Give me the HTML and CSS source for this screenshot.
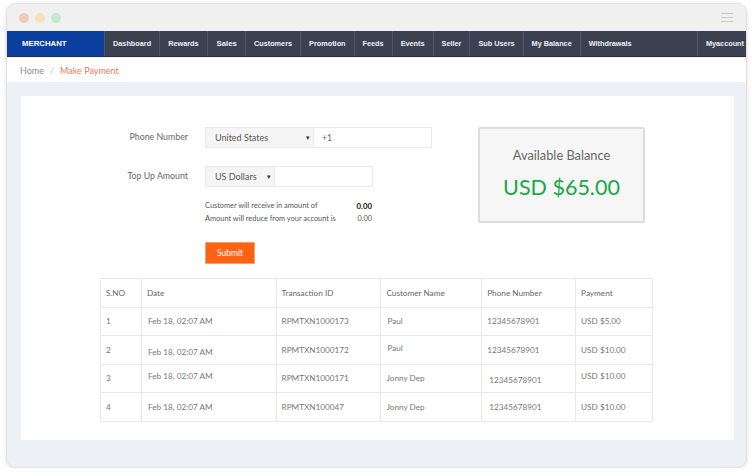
FILE: index.html
```html
<!DOCTYPE html>
<html>
<head>
<meta charset="utf-8">
<link rel="stylesheet" href="styles.css">
</head>
<body>
<div class="window">
  <div class="titlebar">
    <span class="dot dot-red"></span>
    <span class="dot dot-yellow"></span>
    <span class="dot dot-green"></span>
    <span class="spacer"></span>
    <span class="burger"><i></i><i></i><i></i></span>
  </div>
  <nav class="navbar">
    <div class="brand">MERCHANT</div>
    <a class="nav-item">Dashboard</a>
    <a class="nav-item">Rewards</a>
    <a class="nav-item nav-wide">Sales</a>
    <a class="nav-item">Customers</a>
    <a class="nav-item">Promotion</a>
    <a class="nav-item">Feeds</a>
    <a class="nav-item">Events</a>
    <a class="nav-item">Seller</a>
    <a class="nav-item">Sub Users</a>
    <a class="nav-item">My Balance</a>
    <a class="nav-item nav-grow">Withdrawals</a>
    <a class="nav-item nav-last">Myaccount</a>
  </nav>
  <div class="breadcrumb">
    <span class="crumb-home">Home</span>
    <span class="crumb-sep">/</span>
    <span class="crumb-active">Make Payment</span>
  </div>
  <div class="content">
    <div class="panel">
      <div class="top">
        <div class="form">
          <div class="form-row">
            <label class="label">Phone Number</label>
            <div class="fields">
              <div class="select select-country">United States<span class="caret">▾</span></div>
              <div class="input input-phone">+1</div>
            </div>
          </div>
          <div class="form-row form-row-last">
            <label class="label">Top Up Amount</label>
            <div class="fields">
              <div class="select select-currency">US Dollars<span class="caret">▾</span></div>
              <div class="input input-amount"></div>
            </div>
          </div>
          <div class="info">
            <div class="info-line"><span>Customer will receive in amount of</span><b>0.00</b></div>
            <div class="info-line"><span>Amount will reduce from your account is</span><span>0.00</span></div>
          </div>
          <button class="submit">Submit</button>
        </div>
        <div class="balance">
          <div class="balance-title">Available Balance</div>
          <div class="balance-value">USD $65.00</div>
        </div>
      </div>
      <table class="table">
        <thead>
          <tr><th class="c1">S.NO</th><th class="c2">Date</th><th class="c3">Transaction ID</th><th class="c4">Customer Name</th><th class="c5">Phone Number</th><th class="c6">Payment</th></tr>
        </thead>
        <tbody>
          <tr><td>1</td><td class="ind">Feb 18, 02:07 AM</td><td>RPMTXN1000173</td><td class="ind">Paul</td><td>12345678901</td><td>USD $5.00</td></tr>
          <tr><td>2</td><td class="ind down">Feb 18, 02:07 AM</td><td>RPMTXN1000172</td><td class="ind up">Paul</td><td>12345678901</td><td>USD $10.00</td></tr>
          <tr><td>3</td><td class="ind up">Feb 18, 02:07 AM</td><td>RPMTXN1000171</td><td>Jonny Dep</td><td class="ind2 down">12345678901</td><td class="up">USD $10.00</td></tr>
          <tr><td>4</td><td class="ind">Feb 18, 02:07 AM</td><td>RPMTXN100047</td><td>Jonny Dep</td><td class="ind2">12345678901</td><td>USD $10.00</td></tr>
        </tbody>
      </table>
    </div>
  </div>
</div>
</body>
</html>
```

FILE: styles.css
```css
* { box-sizing: border-box; }
html, body { margin: 0; padding: 0; background: #ffffff; }
body { font-family: "Lato", "Open Sans", sans-serif; }

.window {
  margin: 3px 0 0 6px;
  width: 741px;
  height: 465px;
  border: 1px solid #e2e2e2;
  border-radius: 10px;
  overflow: hidden;
  box-shadow: 0 1px 4px rgba(0,0,0,0.12);
  display: flex;
  flex-direction: column;
  background: #edf0f4;
}

.titlebar {
  height: 27px;
  flex-shrink: 0;
  background: #f0f0f0;
  display: flex;
  align-items: center;
  padding: 0 13px 0 12px;
  gap: 6px;
}
.dot { width: 10px; height: 10px; border-radius: 50%; display: block; }
.dot-red { background: #efcbb9; }
.dot-yellow { background: #f3e1b7; }
.dot-green { background: #c3e9d1; }
.spacer { flex: 1; }
.burger { display: flex; flex-direction: column; gap: 3px; width: 12px; }
.burger i { display: block; height: 1px; background: #c8c8c8; }

.navbar {
  height: 26px;
  flex-shrink: 0;
  display: flex;
  background: #3b4150;
  border-bottom: 1px solid #2c313c;
  font-family: "Liberation Sans", Arial, sans-serif;
  font-weight: bold;
  font-size: 7.3px;
  color: #eef1f5;
}
.brand {
  width: 97px;
  background: #0a3e9f;
  display: flex;
  align-items: center;
  padding-left: 15px;
  color: #ffffff;
  font-size: 7.8px;
}
.nav-item {
  display: flex;
  align-items: center;
  padding: 0 8px 0 8px;
  border-left: 1px solid #4f5666;
  white-space: nowrap;
}
.nav-wide { padding: 0 8px 0 9px; font-size: 7.8px; }
.nav-grow { flex: 1; }
.nav-last { padding: 0 2px 0 8px; }

.breadcrumb {
  height: 25px;
  flex-shrink: 0;
  background: #ffffff;
  border-top: 1px solid #efefef;
  display: flex;
  align-items: center;
  padding-left: 13px;
  font-size: 9px;
  gap: 6px;
}
.crumb-home { color: #8d8d8d; }
.crumb-sep { color: #c8c8c8; }
.crumb-active { color: #f27a56; }

.content {
  flex: 1;
  padding: 14px 12px 27px 14px;
}
.panel {
  background: #ffffff;
  height: 100%;
  padding: 31px 0 0 79px;
}

.top { display: flex; align-items: flex-start; }
.form { width: 378px; flex-shrink: 0; }
.form-row { display: flex; align-items: flex-start; margin-bottom: 18px; }
.form-row-last { margin-bottom: 12px; }
.label {
  width: 88px;
  flex-shrink: 0;
  text-align: right;
  font-size: 8.8px;
  color: #666;
  padding-top: 4px;
  white-space: nowrap;
}
.fields { display: flex; margin-left: 17px; flex-shrink: 0; }
.select {
  height: 21px;
  background: #f5f5f5;
  border: 1px solid #e9e9e9;
  display: flex;
  align-items: center;
  justify-content: space-between;
  padding: 0 3px 0 9px;
  font-size: 9px;
  color: #555;
}
.caret { font-size: 7px; color: #333; }
.select-country { width: 109px; }
.select-currency { width: 70px; }
.input {
  height: 21px;
  border: 1px solid #e9e9e9;
  border-left: none;
  display: flex;
  align-items: center;
  padding-left: 8px;
  font-size: 8.5px;
  color: #666;
  background: #fff;
}
.input-phone { width: 118px; }
.input-amount { width: 98px; }

.info { margin-left: 105px; width: 167px; font-size: 7.4px; color: #555; }
.info-line { display: flex; justify-content: space-between; height: 13px; align-items: center; }
.info-line b { color: #111; font-size: 7.8px; }
.submit {
  display: block;
  margin: 17px 0 0 105px;
  width: 50px;
  height: 22px;
  background: #fe6212;
  border: 1px solid #f3a070;
  color: #fff;
  font-family: "Lato", sans-serif;
  font-size: 8.5px;
  padding: 0;
}

.balance {
  width: 167px;
  height: 96px;
  flex-shrink: 0;
  background: #f6f6f6;
  border: 2px solid #dcdcdc;
  border-radius: 2px;
  text-align: center;
}
.balance-title { margin-top: 18px; font-size: 12.8px; color: #666; }
.balance-value { margin-top: 11px; font-size: 21.5px; color: #17a846; }

.table {
  margin: 14px 0 0 0;
  border-collapse: collapse;
  width: 553px;
  font-size: 8.2px;
  color: #777;
}
.table th, .table td {
  border: 1px solid #e8e8e8;
  text-align: left;
  font-weight: normal;
  padding: 0 0 0 5px;
  height: 28.5px;
}
.table th { color: #666; }
.c1 { width: 41px; }
.c2 { width: 135px; }
.c3 { width: 105px; }
.c4 { width: 101px; }
.c5 { width: 94px; }
.c6 { width: 77px; }
.table td.ind { padding-left: 6px; }
.table td.ind2 { padding-left: 7px; }
.table td.up { padding-bottom: 4px; }
.table td.down { padding-top: 4px; }
```
